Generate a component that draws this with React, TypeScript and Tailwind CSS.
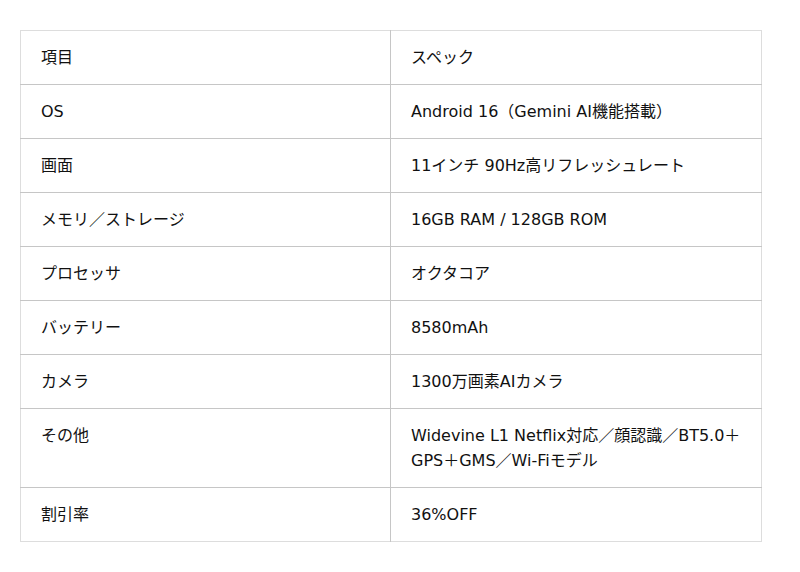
import React from "react";

const rows: [string, string][] = [
  ["項目", "スペック"],
  ["OS", "Android 16（Gemini AI機能搭載）"],
  ["画面", "11インチ 90Hz高リフレッシュレート"],
  ["メモリ／ストレージ", "16GB RAM / 128GB ROM"],
  ["プロセッサ", "オクタコア"],
  ["バッテリー", "8580mAh"],
  ["カメラ", "1300万画素AIカメラ"],
  ["その他", "Widevine L1 Netflix対応／顔認識／BT5.0＋GPS＋GMS／Wi-Fiモデル"],
  ["割引率", "36%OFF"],
];

const App = () => {
  return (
    <div className="min-h-screen bg-white px-5 pt-[30px] font-['DejaVu_Sans','Noto_Sans_CJK_JP',sans-serif] text-[16px] leading-[25px] text-[#111]">
      <table className="w-[742px] table-fixed border-collapse border border-[#ddd]">
        <colgroup>
          <col className="w-[370px]" />
          <col />
        </colgroup>
        <tbody>
          {rows.map(([k, v], i) => (
            <tr key={k} className={i < rows.length - 1 ? "border-b border-[#c6c6c6]" : ""}>
              <td className="border-r border-[#c6c6c6] px-5 py-[14px] align-top">{k}</td>
              <td className="px-5 py-[14px] align-top">{v}</td>
            </tr>
          ))}
        </tbody>
      </table>
    </div>
  );
};

export default App;
